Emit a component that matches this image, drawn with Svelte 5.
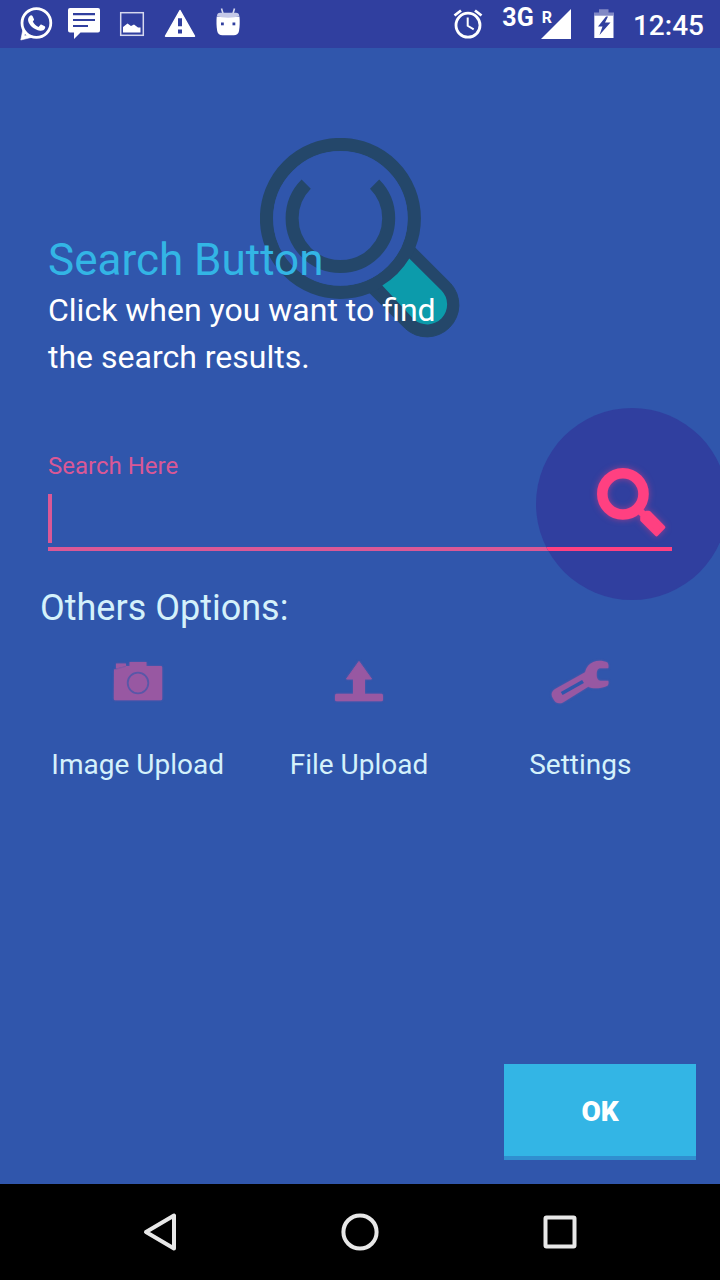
<script>
  let query = $state('');
</script>

<div class="screen">
  <header class="status">
    <div class="notices">
      <svg viewBox="0 0 48 48" aria-hidden="true">
        <circle cx="24.400" cy="23" r="14.400" fill="none" stroke="#fff" stroke-width="2.800" />
        <path d="M11 29 8.800 40 19 37.500 16.500 34.800 12.300 36 13.500 31.500Z" fill="#fff" stroke="#fff" stroke-width=".6" />
        <path d="M17.500 16.200c1.300-1.300 2.400-1 3-.1l1.500 3.100c.2.600-.2 1.200-1.200 2.400 1.200 2.500 3.200 4.400 5.700 5.400l1.800-2c.4-.5.800-.5 1.400-.2l3 1.500c.8.500.6 1.200.2 2.300-.8 1.700-2.900 2.400-4.800 2.100-6.300-1-11.300-6-12-10.300-.2-1.600.3-3 1.400-4.200z" fill="#fff" />
      </svg>
      <svg viewBox="0 0 48 48" aria-hidden="true">
        <path d="M10 8h28a2 2 0 0 1 2 2v20.500a2 2 0 0 1-2 2H20.500L14 39v-6.500h-4a2 2 0 0 1-2-2V10a2 2 0 0 1 2-2z" fill="#fff" />
        <path d="M13 14.200h22M13 20h22M13 26h15" stroke="#303f9f" stroke-width="2.200" />
      </svg>
      <svg viewBox="0 0 48 48" aria-hidden="true">
        <rect x="12.700" y="12.700" width="22.600" height="22.600" fill="none" stroke="#d5d8ee" stroke-width="1.500" />
        <path d="M15 32.500v-5.500l4.500-3.500 3.500 2.500 3-1.500 4 3h2.500v5z" fill="#fff" />
      </svg>
      <svg viewBox="0 0 48 48" aria-hidden="true">
        <path d="M24 10.500 9.500 36.200h29z" fill="#fff" stroke="#fff" stroke-width="1.400" stroke-linejoin="round" />
        <path d="M22 18.300h4v8h-4zM22 29.600h4v4h-4z" fill="#303f9f" />
      </svg>
      <svg viewBox="0 0 48 48" aria-hidden="true">
        <path d="M17.500 8.500l1.500 5M30.500 8.500l-1.500 5" stroke="#d5d8ee" stroke-width="1.600" />
        <path d="M12.700 16.500h22.800c.4 5 .3 10-.5 14.500-.6 2.900-2.500 4.300-5.200 4.300H18.400c-2.700 0-4.600-1.400-5.200-4.300-.8-4.500-.9-9.500-.5-14.500z" fill="#fff" />
        <path d="M16 12.800h16c2 0 3 1 3.300 3-4 2.600-18.300 2.600-22.400 0 .3-2 1.200-3 3.100-3z" fill="#c5c9e8" />
        <rect x="17" y="22.500" width="2.800" height="2.800" fill="#303f9f" />
        <rect x="28.500" y="22.500" width="2.800" height="2.800" fill="#303f9f" />
      </svg>
    </div>
    <div class="system">
      <svg class="alarm" viewBox="0 0 32 48" aria-hidden="true">
        <g fill="none" stroke="#fff">
          <circle cx="16" cy="25.200" r="12" stroke-width="2.800" />
          <path d="M2.500 15.500 9 10.500M29.500 15.500 23 10.500" stroke-width="2.800" />
          <path d="M15.700 17.500v8.300l6 3.600" stroke-width="2" />
        </g>
      </svg>
      <span class="network">3G</span>
      <span class="roaming">R</span>
      <svg class="signal" viewBox="0 0 30 48" aria-hidden="true"><path d="M0 39 30 9v30z" fill="#fff" /></svg>
      <svg class="battery" viewBox="0 0 20 48" aria-hidden="true">
        <path d="M0 12.500h5V9.300h9.500v3.200H20V16H0z" fill="#8189c5" />
        <path d="M.3 15.700h19.200V38H.3z" fill="#fff" />
        <path d="M12 16.500 4 26.500h4.500L5.500 35l11-12.500h-5.500l3-6z" fill="#303f9f" />
      </svg>
      <time>12:45</time>
    </div>
  </header>

  <main>
    <svg class="emblem" viewBox="0 0 200 200" aria-hidden="true">
      <path d="M106 151.200 145.400 190.600A32 32 0 0 0 190.600 145.400L151 105.800Z" fill="#24476a" stroke="#24476a" />
      <circle cx="80.400" cy="80.400" r="73.900" fill="none" stroke="#24476a" stroke-width="13.200" />
      <circle cx="80.400" cy="80.400" r="67.200" fill="#3056ac" />
      <path d="M46.200 46.200a48.300 48.300 0 1 0 68.400 0" fill="none" stroke="#24476a" stroke-width="13" />
      <path d="M149.300 120.500 181.500 152.500A20 20 0 0 1 154 181.500L122.300 147.500A80 80 0 0 0 149.300 120.500Z" fill="#0c9bab" />
    </svg>

    <section class="intro">
      <h1>Search Button</h1>
      <p>Click when you want to find<br />the search results.</p>
    </section>

    <div class="field">
      <label for="query">Search Here</label>
      <div class="entry">
        <span class="caret"></span>
        <input id="query" type="text" bind:value={query} />
      </div>
    </div>

    <button class="search" aria-label="Search">
      <svg viewBox="0 0 192 192" aria-hidden="true">
        <defs><clipPath id="disc"><circle cx="96" cy="96" r="96" /></clipPath></defs>
        <circle cx="96" cy="96" r="96" fill="#303f9f" />
        <path d="M0 139h136v4H0z" fill="#ff4081" clip-path="url(#disc)" />
        <g class="glass" stroke="#ff4081">
          <circle cx="86.900" cy="85.900" r="20.600" fill="none" stroke-width="10.600" />
          <path d="M101 100 110 109" stroke-width="7" />
          <path d="M113 104.500 127.500 119.200 120.500 126.500 106 112V109.500L110.500 104.500Z" fill="#ff4081" stroke-width="3.600" stroke-linejoin="round" />
        </g>
      </svg>
    </button>

    <h2>Others Options:</h2>
    <div class="options">
      <button>
        <svg viewBox="0 0 64 64" aria-hidden="true">
          <path d="M8 19.500 20 16h3.500v-4h17v4H55a1.200 1.200 0 0 1 1.200 1.200V49a1.200 1.200 0 0 1-1.200 1.200H9A1.200 1.200 0 0 1 7.800 49z" fill="#9858a2" />
          <path d="M10 18.500v-5.100h10v2.600z" fill="#9858a2" />
          <path d="M9 19.800 20 16.400" stroke="#7d58a5" stroke-width=".8" />
          <circle cx="32" cy="33" r="10.300" fill="none" stroke="#5957a8" stroke-width="1.800" />
        </svg>
        Image Upload
      </button>
      <button>
        <svg viewBox="0 0 64 64" aria-hidden="true">
          <path d="M32 11.500 44.500 29H37.500V44H26.500V29H19.500Z" fill="#9858a2" stroke="#9858a2" stroke-linejoin="round" />
          <rect x="8" y="43.800" width="48" height="7.400" rx="1.500" fill="#9858a2" />
        </svg>
        File Upload
      </button>
      <button>
        <svg viewBox="0 0 64 64" aria-hidden="true">
          <path d="M59.500 12.500C53 9.500 44.500 10.500 40.300 15.500C38 18.300 37.800 20 37 22.300L7.500 38.800C3 41.500 2.800 45 5 48.500C7 53 11 54.500 15 52.500L40.300 36.800C44.500 39 52 39 59.500 35.800C60.800 34 60.700 32.500 60.300 30.800H52.500C49.800 30.500 48.700 28 48.700 24.500C48.700 21.500 49.500 18.500 52 18.300H60.300C60.700 16 60.600 14 59.500 12.500Z" fill="#9858a2" />
          <path d="M13.700 43.500 35 31.500" stroke="#3056ac" stroke-width="3.600" />
        </svg>
        Settings
      </button>
    </div>

    <button class="ok">OK</button>
  </main>

  <nav>
    <button aria-label="Back">
      <svg viewBox="0 0 48 48" aria-hidden="true"><path d="M38 7.500v33L10 24z" /></svg>
    </button>
    <button aria-label="Home">
      <svg viewBox="0 0 48 48" aria-hidden="true"><circle cx="24" cy="24" r="16.600" /></svg>
    </button>
    <button aria-label="Recent apps">
      <svg viewBox="0 0 48 48" aria-hidden="true"><rect x="9.500" y="9.500" width="29" height="29" rx="1" /></svg>
    </button>
  </nav>
</div>

<style>
  :global(body) {
    background: #3056ac;
  }

  .screen {
    display: flex;
    flex-direction: column;
    min-height: 100vh;
    font-family: Roboto, 'Noto Sans', sans-serif;
    color: #fff;
    background: #3056ac;
  }

  svg {
    display: block;
  }

  button {
    padding: 0;
    border: 0;
    background: none;
    color: inherit;
    font-family: inherit;
    cursor: pointer;
  }

  .status {
    display: flex;
    justify-content: space-between;
    height: 48px;
    padding: 0 16px 0 12px;
    background: #303f9f;
  }

  .notices,
  .system {
    display: flex;
  }

  .notices svg {
    width: 48px;
    height: 48px;
  }

  .system svg {
    height: 48px;
  }

  .alarm {
    width: 32px;
    margin-right: 18px;
  }

  .network {
    font-size: 25px;
    font-weight: 700;
    line-height: 36px;
  }

  .roaming {
    margin-left: 8px;
    font-size: 16px;
    font-weight: 700;
    line-height: 36px;
  }

  .signal {
    width: 30px;
    margin-left: -11px;
  }

  .battery {
    width: 20px;
    margin: 0 19px 0 23px;
  }

  time {
    font-size: 28px;
    font-weight: 500;
    line-height: 52px;
  }

  main {
    position: relative;
    display: flex;
    flex: 1;
    flex-direction: column;
    overflow: hidden;
  }

  .emblem {
    position: absolute;
    top: 90px;
    right: 0;
    left: 0;
    width: 200px;
    height: 200px;
    margin: 0 auto;
  }

  .intro {
    position: relative;
    padding: 187px 48px 0;
  }

  h1 {
    margin: 0;
    padding-bottom: 2px;
    font-size: 44px;
    font-weight: 400;
    line-height: 50px;
    color: #33b5e5;
  }

  p {
    margin: 0;
    font-size: 32px;
    line-height: 47px;
  }

  .field {
    margin: 71px 48px 0;
    color: #da5896;
  }

  label {
    display: block;
    font-size: 24px;
    line-height: 28px;
  }

  .entry {
    display: flex;
    height: 49px;
    padding: 14px 0 4px;
    border-bottom: 4px solid #da5896;
  }

  .caret {
    width: 4px;
    background: #da5896;
  }

  input {
    flex: 1;
    min-width: 0;
    padding: 0;
    border: 0;
    outline: 0;
    background: none;
    color: #fff;
    font-family: inherit;
    font-size: 36px;
    caret-color: transparent;
  }

  .search {
    position: absolute;
    top: 360px;
    right: -8px;
    width: 192px;
    height: 192px;
    border-radius: 50%;
  }

  .glass {
    filter: drop-shadow(0 0 3px #ff408180);
  }

  h2 {
    position: relative;
    margin: 36px 40px 0;
    font-size: 36px;
    font-weight: 400;
    line-height: 42px;
    color: #d4f1fb;
  }

  .options {
    display: grid;
    grid-template-columns: repeat(3, 1fr);
    margin: 21px 29px 24px 27px;
  }

  .options button {
    display: flex;
    flex-direction: column;
    gap: 34px;
    align-items: center;
    font-size: 28px;
    line-height: 33px;
    color: #d4f1fb;
  }

  .options svg {
    width: 64px;
    height: 64px;
    filter: drop-shadow(0 0 1px #9858a280);
  }

  .ok {
    align-self: flex-end;
    width: 192px;
    height: 96px;
    margin: auto 24px 24px;
    padding-top: 2px;
    border-bottom: 4px solid #308fd0;
    background: #33b5e5;
    font-size: 28px;
    font-weight: 900;
  }

  nav {
    display: grid;
    grid-template-columns: repeat(3, 1fr);
    height: 96px;
    padding: 0 60px;
    background: #000;
  }

  nav button {
    display: grid;
    place-items: center;
  }

  nav svg {
    width: 48px;
    height: 48px;
    fill: none;
    stroke: #e8e8e8;
    stroke-width: 4px;
    stroke-linejoin: round;
  }
</style>
